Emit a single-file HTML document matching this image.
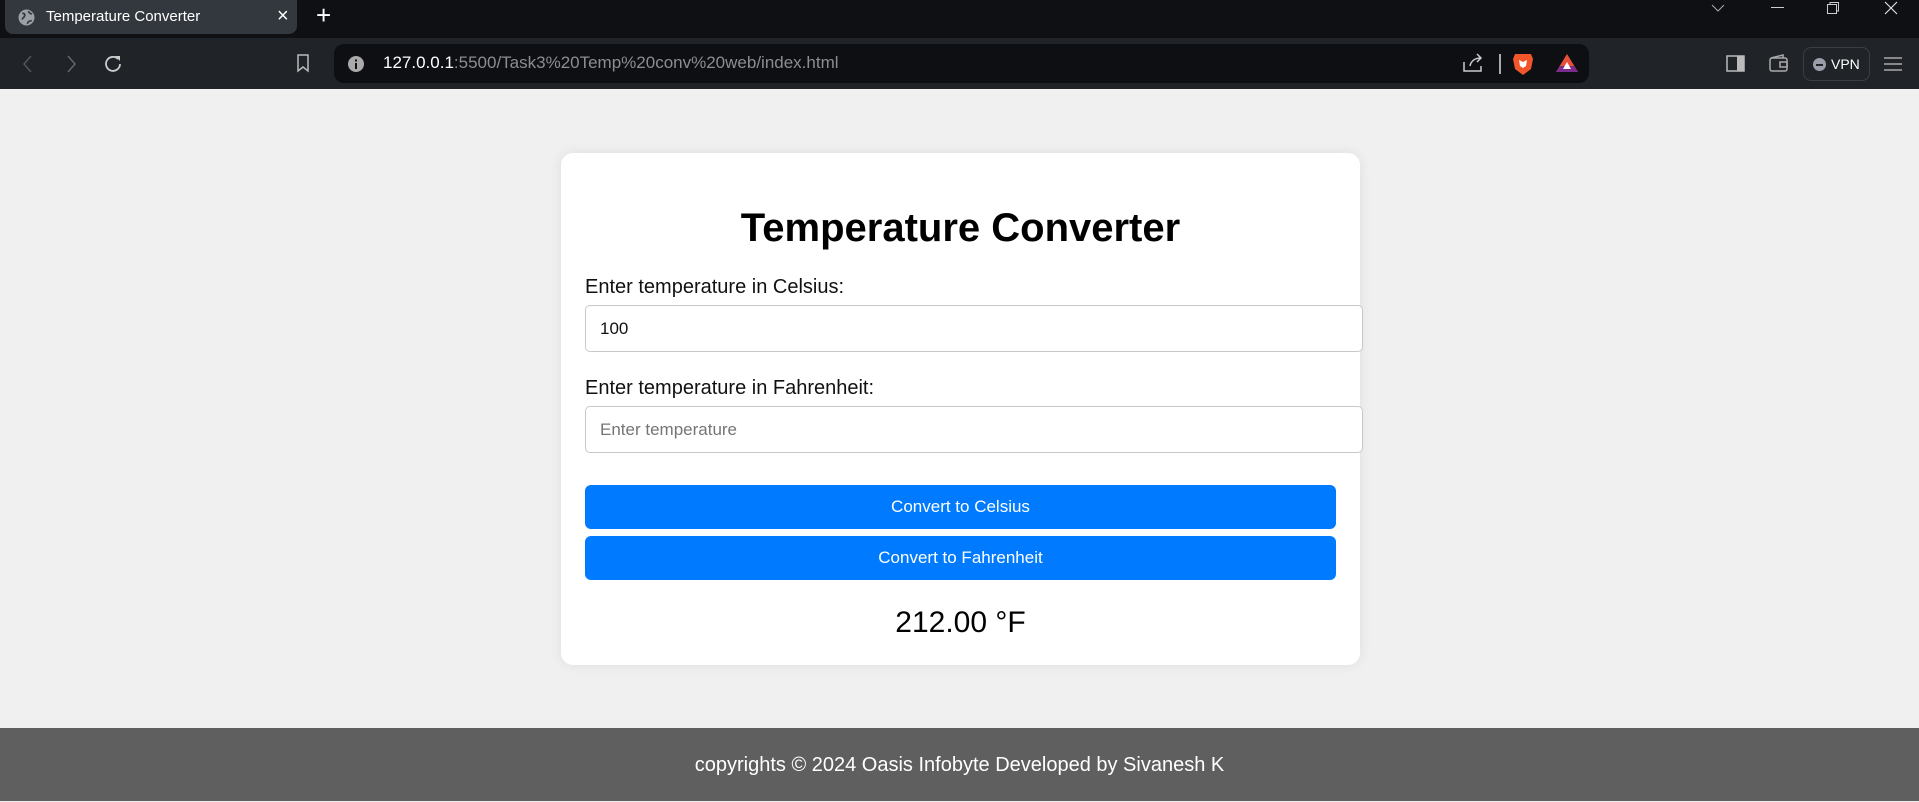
<!DOCTYPE html>
<html><head><meta charset="utf-8"><style>
*{box-sizing:border-box;margin:0;padding:0}
body{width:1919px;height:801px;overflow:hidden;background:#f0f0f0;font-family:"Liberation Sans",Arial,sans-serif;position:relative}
.tabbar{position:absolute;left:0;top:0;width:1919px;height:38px;background:#0e1014}
.tab{position:absolute;left:5px;top:0;width:292px;height:34px;background:#33383f;border-radius:0 0 8px 8px;color:#fff;font-size:15px}
.toolbar{position:absolute;left:0;top:38px;width:1919px;height:51px;background:#202327}
.addr{position:absolute;left:334px;top:6px;width:1255px;height:39px;background:#0d0f13;border-radius:10px;color:#8a8d92;font-size:17px}
.card{position:absolute;left:561px;top:153px;width:799px;height:512px;background:#fff;border-radius:12px;box-shadow:0 0 12px rgba(0,0,0,.08)}
h1{position:absolute;left:0;width:799px;top:206px;text-align:center;font-size:40px;font-weight:bold;color:#000}
.lbl{position:absolute;left:585px;font-size:20px;color:#111}
.inp{position:absolute;left:585px;width:778px;height:47px;border:1px solid #c8c8c8;border-radius:5px;background:#fff;font-size:17px;padding-left:14px;line-height:45px}
.btn{position:absolute;left:585px;width:751px;height:44px;background:#007bff;border-radius:6px;color:#fff;font-size:17px;text-align:center;line-height:44px}
.res{position:absolute;left:561px;width:799px;top:606px;text-align:center;font-size:30px;color:#000}
.foot{position:absolute;left:0;top:728px;width:1919px;height:73px;background:#5f5f5f;color:#fff;font-size:20px;text-align:center;line-height:74px}
</style></head><body>
<div class="tabbar">
 <div class="tab">
  <svg style="position:absolute;left:13px;top:9px" width="17" height="17" viewBox="0 0 16 16"><circle cx="8" cy="8" r="7.5" fill="#9aa0a6"/><path d="M4 4c2 0 3 1 2 3s-2 1-2 3M10 2c0 2 2 2 3 3M9 14c0-2 2-3 4-3" stroke="#33383f" stroke-width="1.6" fill="none"/></svg>
  <span style="position:absolute;left:41px;top:8px">Temperature Converter</span>
  <span style="position:absolute;left:272px;top:5px;font-size:20px">×</span>
 </div>
 <span style="position:absolute;left:316px;top:0px;color:#fff;font-size:26px">+</span>
 <svg style="position:absolute;left:1710px;top:3px" width="16" height="10"><path d="M2 2l6 6 6-6" stroke="#aaa" fill="none"/></svg>
 <div style="position:absolute;left:1771px;top:7px;width:13px;height:1px;background:#ccc"></div>
 <svg style="position:absolute;left:1826px;top:1px" width="14" height="14"><rect x="1.5" y="3.5" width="9" height="9" fill="none" stroke="#ccc"/><path d="M4 3V1.5h8.5V10H11" fill="none" stroke="#ccc"/></svg>
 <svg style="position:absolute;left:1884px;top:1px" width="14" height="14"><path d="M1 1l12 12M13 1L1 13" stroke="#ddd" stroke-width="1.2"/></svg>
</div>
<div class="toolbar">
 <svg style="position:absolute;left:22px;top:16px" width="12" height="20"><path d="M9 2L2 10l7 8" stroke="#555" fill="none" stroke-width="1.5"/></svg>
 <svg style="position:absolute;left:65px;top:16px" width="12" height="20"><path d="M3 2l7 8-7 8" stroke="#666" fill="none" stroke-width="1.5"/></svg>
 <svg style="position:absolute;left:103px;top:15px" width="20" height="20"><path d="M15 6A7 7 0 1 0 17 11" stroke="#ccc" fill="none" stroke-width="1.8"/><path d="M12 3h5v5z" fill="#ccc"/></svg>
 <svg style="position:absolute;left:296px;top:15px" width="14" height="20"><path d="M2 2h10v16l-5-4-5 4z" stroke="#bbb" fill="none" stroke-width="1.5"/></svg>
 <div class="addr">
  <svg style="position:absolute;left:14px;top:12px" width="16" height="16"><circle cx="8" cy="8" r="8" fill="#aaa"/><rect x="7" y="7" width="2" height="6" fill="#0d0f13"/><rect x="7" y="3.5" width="2" height="2" fill="#0d0f13"/></svg>
  <span style="position:absolute;left:49px;top:9px"><span style="color:#fff">127.0.0.1</span>:5500/Task3%20Temp%20conv%20web/index.html</span>
  <svg style="position:absolute;left:1128px;top:9px" width="22" height="20"><path d="M2 9v9h17v-5M8 13c1-5 5-8 11-8M15 1l4 4-4 4" stroke="#ccc" fill="none" stroke-width="1.5"/></svg>
  <div style="position:absolute;left:1165px;top:10px;width:1.5px;height:20px;background:#aaa"></div>
  <svg style="position:absolute;left:1178px;top:7px" width="22" height="25"><path d="M3 3h16l2 5-2 10-8 6-8-6-2-10z" fill="#f1562b"/><path d="M7 9l4 2 4-2-1 6-3 2-3-2z" fill="#fff"/></svg>
  <svg style="position:absolute;left:1221px;top:9px" width="24" height="20"><path d="M12 1l11 18H1z" fill="#e8503a"/><path d="M1 19h22l-4-6H5z" fill="#7b2a8e"/><path d="M12 9l4 7H8z" fill="#fff"/></svg>
 </div>
 <svg style="position:absolute;left:1726px;top:17px" width="20" height="18"><rect x="1" y="1" width="17" height="15" fill="none" stroke="#bbb" stroke-width="1.5"/><rect x="11" y="1" width="7" height="15" fill="#bbb"/></svg>
 <svg style="position:absolute;left:1769px;top:16px" width="20" height="18"><rect x="1" y="4" width="17" height="13" rx="2" fill="none" stroke="#aaa" stroke-width="1.5"/><path d="M2 4l12-3v3" fill="none" stroke="#aaa" stroke-width="1.5"/><rect x="11" y="8" width="7" height="5" fill="none" stroke="#aaa" stroke-width="1.5"/></svg>
 <div style="position:absolute;left:1803px;top:9px;width:67px;height:34px;border:1px solid #3b3f44;border-radius:8px;color:#fff;font-size:14px">
  <span style="position:absolute;left:9px;top:10px;width:13px;height:13px;border-radius:50%;background:#9a9daa"></span>
  <span style="position:absolute;left:12px;top:15.5px;width:7px;height:2px;background:#202327"></span>
  <span style="position:absolute;left:27px;top:8px">VPN</span>
 </div>
 <svg style="position:absolute;left:1884px;top:18px" width="18" height="16"><path d="M0 2h18M0 8h18M0 14h18" stroke="#aaa" stroke-width="1.6"/></svg>
</div>
<div class="card"></div>
<h1 style="left:561px">Temperature Converter</h1>
<div class="lbl" style="top:276px">Enter temperature in Celsius:</div>
<div class="inp" style="top:305px;color:#111">100</div>
<div class="lbl" style="top:377px">Enter temperature in Fahrenheit:</div>
<div class="inp" style="top:406px;color:#757575">Enter temperature</div>
<div class="btn" style="top:485px">Convert to Celsius</div>
<div class="btn" style="top:536px">Convert to Fahrenheit</div>
<div class="res">212.00 °F</div>
<div class="foot">copyrights © 2024 Oasis Infobyte Developed by Sivanesh K</div>
</body></html>
